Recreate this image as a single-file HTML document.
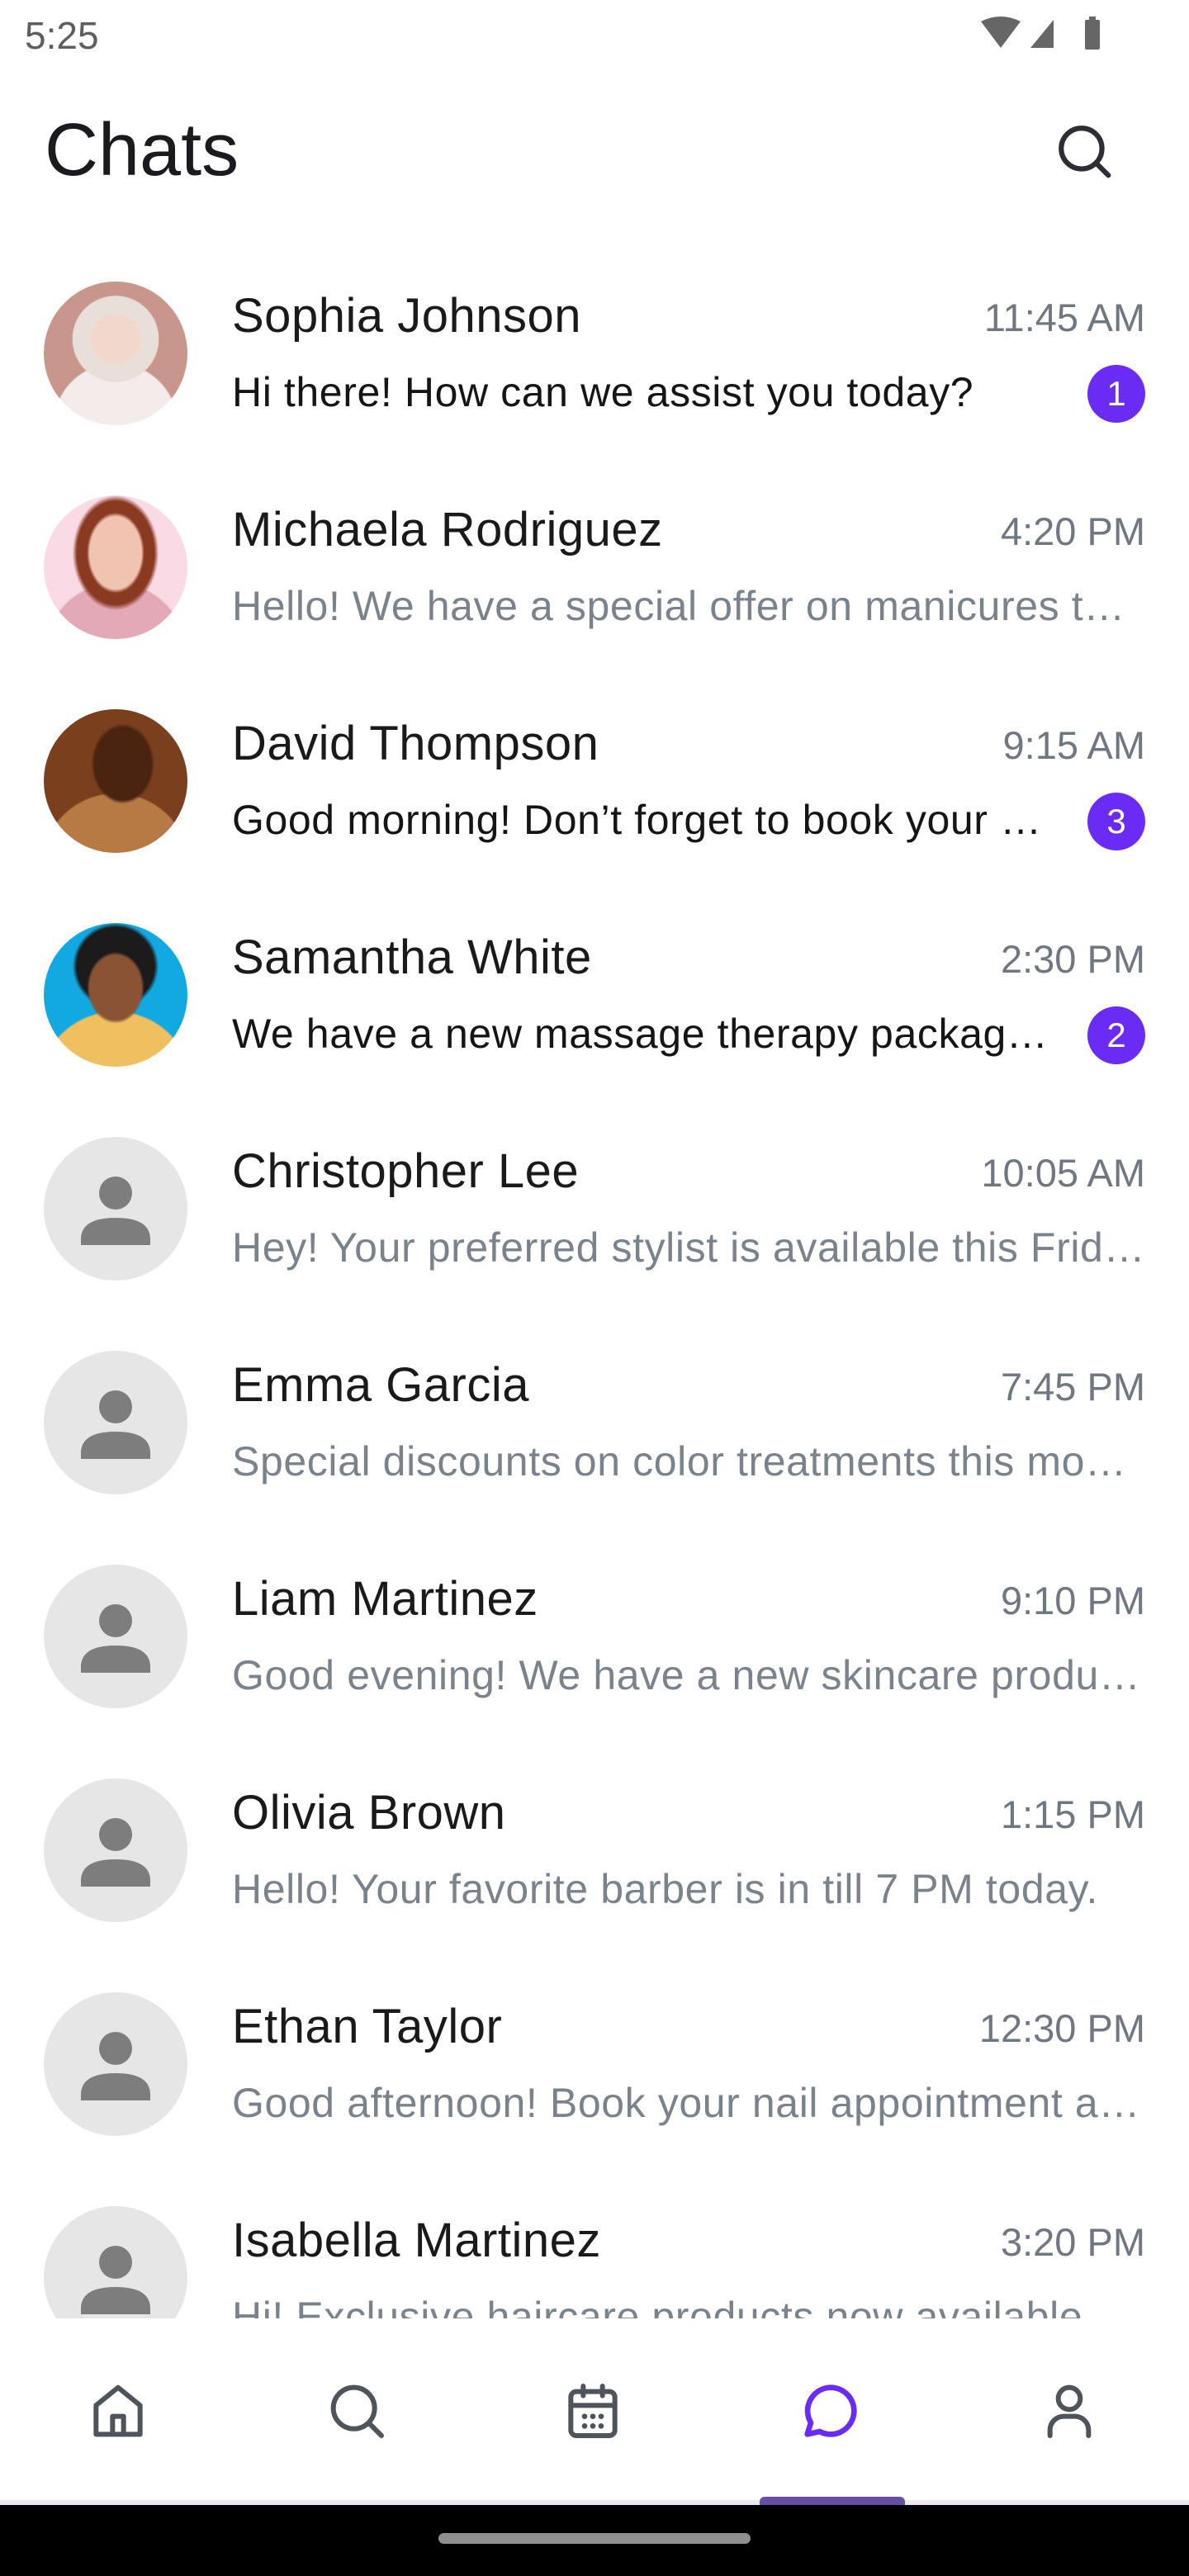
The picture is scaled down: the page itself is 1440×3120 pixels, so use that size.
<!DOCTYPE html>
<html><head><meta charset="utf-8"><style>
*{margin:0;padding:0;box-sizing:border-box}
body{width:1440px;height:3120px;background:#fff;font-family:"Liberation Sans",sans-serif;position:relative;overflow:hidden}
.abs{position:absolute}
.row{position:absolute;left:0;width:1440px;height:259px}
.av{position:absolute;left:53px;top:-87px;width:174px;height:174px;border-radius:50%;overflow:hidden;background:#e6e6e6}
.name{position:absolute;left:281px;top:-78px;font-size:58px;letter-spacing:0.5px;color:#1a1a1a;line-height:66px;white-space:nowrap}
.time{position:absolute;right:53px;top:-73px;font-size:47px;color:#6f7780;line-height:60px}
.msg{position:absolute;left:281px;top:16px;font-size:50px;letter-spacing:0.6px;line-height:62px;color:#7a838b;white-space:nowrap;overflow:hidden;text-overflow:ellipsis;width:1106px}
.msg.u{color:#151515;width:990px}
.badge{position:absolute;left:1317px;top:14px;width:70px;height:70px;border-radius:50%;background:#6a2cf5;color:#fff;font-size:42px;text-align:center;line-height:70px}
</style></head><body>
<div class="abs" style="left:30px;top:16px;font-size:46px;color:#5e5e5e">5:25</div>
<svg class="abs" style="left:1186px;top:18px" width="160" height="46" viewBox="0 0 160 46">
<path d="M2 8 Q26 -4 50 8 L26 40 Z" fill="#666"/>
<path d="M62 40 L90 6 L90 40 Z" fill="#666"/>
<rect x="128" y="6" width="18" height="36" rx="2" fill="#666"/><rect x="133" y="2" width="8" height="5" fill="#666"/>
</svg>
<div class="abs" style="left:54px;top:130px;font-size:90px;color:#1b1b1f;line-height:104px">Chats</div>
<svg class="abs" style="left:1276px;top:146px" width="74" height="74" viewBox="0 0 24 24" fill="none" stroke="#2d2d33" stroke-width="2" stroke-linecap="round"><circle cx="11" cy="11" r="8"/><path d="M17 17l4.5 4.5"/></svg>

<div style="position:absolute;left:0;top:0;width:1440px;height:2808px;overflow:hidden">
<div class="row" style="top:428px"><div class="av" style="background:radial-gradient(circle at 50% 40%,#f0d8cc 0 22%,#e8e0d8 23% 38%,transparent 39%),radial-gradient(circle at 50% 100%,#f4ecea 0 38%,transparent 39%),#c8968a"></div><div class="name">Sophia Johnson</div><div class="time">11:45 AM</div><div class="msg u">Hi there! How can we assist you today?</div><div class="badge">1</div></div>
<div class="row" style="top:687px"><div class="av" style="background:radial-gradient(ellipse 20% 28% at 50% 40%,#f0c4b0 0 90%,transparent 100%),radial-gradient(ellipse 30% 40% at 50% 40%,#8b3a22 0 90%,transparent 100%),radial-gradient(circle at 50% 110%,#e4a9b6 0 40%,transparent 41%),#fadbe5"></div><div class="name">Michaela Rodriguez</div><div class="time">4:20 PM</div><div class="msg">Hello! We have a special offer on manicures this week!</div></div>
<div class="row" style="top:946px"><div class="av" style="background:radial-gradient(ellipse 22% 28% at 55% 38%,#4a2410 0 90%,transparent 100%),radial-gradient(circle at 50% 110%,#b87a45 0 42%,transparent 43%),#7a3f1d"></div><div class="name">David Thompson</div><div class="time">9:15 AM</div><div class="msg u">Good morning! Don’t forget to book your appointment</div><div class="badge">3</div></div>
<div class="row" style="top:1205px"><div class="av" style="background:radial-gradient(ellipse 20% 25% at 50% 45%,#8a5434 0 90%,transparent 100%),radial-gradient(ellipse 30% 30% at 50% 30%,#1b1b1b 0 90%,transparent 100%),radial-gradient(circle at 50% 115%,#f0c060 0 42%,transparent 43%),#12a9e3"></div><div class="name">Samantha White</div><div class="time">2:30 PM</div><div class="msg u">We have a new massage therapy package available</div><div class="badge">2</div></div>
<div class="row" style="top:1464px"><div class="av"><svg width="174" height="174" viewBox="0 0 174 174"><circle cx="87" cy="68" r="20" fill="#7d7d7d"/><path d="M45 124 Q45 98 87 98 Q129 98 129 124 L129 131 L45 131 Z" fill="#7d7d7d"/></svg></div><div class="name">Christopher Lee</div><div class="time">10:05 AM</div><div class="msg">Hey! Your preferred stylist is available this Friday afternoon.</div></div>
<div class="row" style="top:1723px"><div class="av"><svg width="174" height="174" viewBox="0 0 174 174"><circle cx="87" cy="68" r="20" fill="#7d7d7d"/><path d="M45 124 Q45 98 87 98 Q129 98 129 124 L129 131 L45 131 Z" fill="#7d7d7d"/></svg></div><div class="name">Emma Garcia</div><div class="time">7:45 PM</div><div class="msg">Special discounts on color treatments this month only!</div></div>
<div class="row" style="top:1982px"><div class="av"><svg width="174" height="174" viewBox="0 0 174 174"><circle cx="87" cy="68" r="20" fill="#7d7d7d"/><path d="M45 124 Q45 98 87 98 Q129 98 129 124 L129 131 L45 131 Z" fill="#7d7d7d"/></svg></div><div class="name">Liam Martinez</div><div class="time">9:10 PM</div><div class="msg">Good evening! We have a new skincare product line in stock.</div></div>
<div class="row" style="top:2241px"><div class="av"><svg width="174" height="174" viewBox="0 0 174 174"><circle cx="87" cy="68" r="20" fill="#7d7d7d"/><path d="M45 124 Q45 98 87 98 Q129 98 129 124 L129 131 L45 131 Z" fill="#7d7d7d"/></svg></div><div class="name">Olivia Brown</div><div class="time">1:15 PM</div><div class="msg">Hello! Your favorite barber is in till 7 PM today.</div></div>
<div class="row" style="top:2500px"><div class="av"><svg width="174" height="174" viewBox="0 0 174 174"><circle cx="87" cy="68" r="20" fill="#7d7d7d"/><path d="M45 124 Q45 98 87 98 Q129 98 129 124 L129 131 L45 131 Z" fill="#7d7d7d"/></svg></div><div class="name">Ethan Taylor</div><div class="time">12:30 PM</div><div class="msg">Good afternoon! Book your nail appointment and get a free gift.</div></div>
<div class="row" style="top:2759px"><div class="av"><svg width="174" height="174" viewBox="0 0 174 174"><circle cx="87" cy="68" r="20" fill="#7d7d7d"/><path d="M45 124 Q45 98 87 98 Q129 98 129 124 L129 131 L45 131 Z" fill="#7d7d7d"/></svg></div><div class="name">Isabella Martinez</div><div class="time">3:20 PM</div><div class="msg">Hi! Exclusive haircare products now available.</div></div>
</div>

<svg class="abs" style="left:103px;top:2880px" width="80" height="80" viewBox="0 0 24 24" fill="none" stroke="#4f545a" stroke-width="1.8" stroke-linejoin="round"><path d="M4 10 L12 3.5 L20 10 V20.5 H4 Z"/><path d="M10 20.5 V14 H14 V20.5"/></svg>
<svg class="abs" style="left:392px;top:2880px" width="80" height="80" viewBox="0 0 24 24" fill="none" stroke="#4f545a" stroke-width="1.8" stroke-linecap="round"><circle cx="11" cy="11" r="7.5"/><path d="M16.5 16.5 L21 21"/></svg>
<svg class="abs" style="left:678px;top:2880px" width="80" height="80" viewBox="0 0 24 24" fill="none" stroke="#4f545a" stroke-width="1.8" stroke-linecap="round"><rect x="4" y="5" width="16" height="16" rx="2"/><path d="M4 10 H20 M8.5 3 V6.5 M15.5 3 V6.5"/><g fill="#4f545a" stroke="none"><circle cx="9" cy="14" r="1"/><circle cx="12" cy="14" r="1"/><circle cx="15" cy="14" r="1"/><circle cx="9" cy="17.5" r="1"/><circle cx="12" cy="17.5" r="1"/><circle cx="15" cy="17.5" r="1"/></g></svg>
<svg class="abs" style="left:966px;top:2880px" width="80" height="80" viewBox="0 0 24 24" fill="none" stroke="#6a2cf5" stroke-width="2" stroke-linejoin="round"><path d="M12 3.5 A8.5 8.5 0 1 1 8 19.5 L3.5 20.5 L4.8 16.3 A8.5 8.5 0 0 1 12 3.5 Z"/></svg>
<svg class="abs" style="left:1255px;top:2880px" width="80" height="80" viewBox="0 0 24 24" fill="none" stroke="#4f545a" stroke-width="1.8" stroke-linecap="round"><circle cx="12" cy="7.5" r="4"/><path d="M5 21 V19 A5 5 0 0 1 10 14 H14 A5 5 0 0 1 19 19 V21"/></svg>

<div class="abs" style="left:0;top:3028px;width:1440px;height:6px;background:#ece6f0"></div>
<div class="abs" style="left:920px;top:3024px;width:176px;height:12px;border-radius:6px 6px 0 0;background:#6750a4"></div>
<div class="abs" style="left:0;top:3034px;width:1440px;height:86px;background:#000"></div>
<div class="abs" style="left:531px;top:3068px;width:378px;height:13px;border-radius:7px;background:#8f8f8f"></div>
</body></html>
